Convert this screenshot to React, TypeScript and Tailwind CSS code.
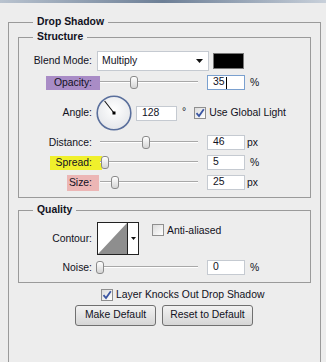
import React from 'react';

const font = { fontFamily: '"Liberation Sans", Arial, sans-serif' };

const Slider = ({ pos }: { pos: number }) => (
  <div className="relative w-[98px] h-[15px] ml-[3px]">
    <div className="absolute left-0 right-0 top-[6px] h-[2px] border-t border-[#a8a8a8] border-b border-b-white" />
    {/* thumb */}
    <div
      className="absolute top-[1px] w-[8px] h-[13px] rounded-[3px] border border-[#8a8a8a] bg-gradient-to-b from-white to-[#d4d4d4]"
      style={{ left: pos - 100 - 4 }}
    />
  </div>
);

const NumInput = ({ value, focused }: { value: string; focused?: boolean }) => (
  <div
    className={`w-[38px] h-[15px] bg-white border flex items-center pl-[5px] text-[10.4px] leading-none ${
      focused ? 'border-[#7aa0cf]' : 'border-[#c5cad1]'
    }`}
  >
    <span>{value}</span>
    {focused && <span className="inline-block w-px h-[12px] bg-black ml-[1px]" />}
  </div>
);

const Check = ({ checked }: { checked?: boolean }) => (
  <div className="w-[12px] h-[12px] border border-[#8f8f8f] bg-gradient-to-br from-[#dcdcdc] to-white flex items-center justify-center">
    {checked && (
      <svg width="10" height="10" viewBox="0 0 10 10">
        <path d="M1.5 5.2 L4 8 L8.8 1.2" fill="none" stroke="#3b56a3" strokeWidth="1.8" />
      </svg>
    )}
  </div>
);

const Label = ({ text, hl }: { text: string; hl?: string }) => (
  <div className="w-[73px] flex justify-end shrink-0">
    <span className={`text-[10.4px] leading-[14px] ${hl ?? ''}`}>{text}</span>
  </div>
);

const SliderRow = ({
  label,
  pos,
  value,
  unit,
  focused,
}: {
  label: React.ReactNode;
  pos: number;
  value: string;
  unit: string;
  focused?: boolean;
}) => (
  <div className="flex items-center h-[15px]">
    {label}
    <div className="w-[5px]" />
    <Slider pos={pos} />
    <div className="w-[9px]" />
    <NumInput value={value} focused={focused} />
    <span className={`text-[10.4px] ${unit === 'px' ? 'ml-[2px]' : 'ml-[5px]'}`}>{unit}</span>
  </div>
);

export default function App() {
  return (
    <div className="w-[326px] h-[362px] overflow-hidden bg-[#ededed] text-[#111122]" style={font}>
      <div className="h-[3px] bg-gradient-to-r from-[#b9c3cf] via-[#6d7f96] to-[#c8d0da]" />

      <fieldset className="ml-[8px] mt-[12px] w-[313px] h-[400px] border border-[#9a9a9a] px-[9px]">
        <legend className="ml-[15px] px-[4px] text-[10.4px] font-bold leading-[14px]">Drop Shadow</legend>

        <fieldset className="mt-[1px] border border-[#9a9a9a] pb-[7px]">
          <legend className="ml-[14px] px-[4px] text-[10.4px] font-bold leading-[14px]">Structure</legend>

          <div className="flex flex-col pt-[7px]">
            {/* Blend mode */}
            <div className="flex items-center h-[20px]">
              <Label text="Blend Mode:" />
              <div className="w-[5px]" />
              <div className="w-[112px] h-[20px] bg-white border border-[#c5cad1] flex items-center justify-between pl-[4px] pr-[5px]">
                <span className="text-[10.4px]">Multiply</span>
                <svg width="7" height="4" viewBox="0 0 7 4">
                  <path d="M0 0 H7 L3.5 4 Z" fill="#111" />
                </svg>
              </div>
              <div className="ml-[4px] w-[31px] h-[16px] bg-black border border-[#777]" />
            </div>

            <div className="h-[4px]" />
            <SliderRow
              label={<Label text="Opacity:" hl="bg-[#a98cc6] pl-[8px] pr-[8px] -mr-[8px]" />}
              pos={134}
              value="35"
              unit="%"
              focused
            />

            {/* Angle */}
            <div className="flex items-center h-[36px] mt-[5px]">
              <Label text="Angle:" />
              <div className="w-[4px]" />
              <svg width="36" height="36" viewBox="0 0 36 36">
                <defs>
                  <radialGradient id="dg" cx="50%" cy="40%" r="60%">
                    <stop offset="0%" stopColor="#ffffff" />
                    <stop offset="100%" stopColor="#e4e6ea" />
                  </radialGradient>
                </defs>
                <circle cx="18" cy="18" r="16.8" fill="url(#dg)" stroke="#5a6f9c" strokeWidth="1.6" />
                <line x1="18" y1="18" x2="8.6" y2="6" stroke="#111" strokeWidth="1.1" />
                <rect x="16.5" y="16.5" width="3" height="3" fill="#000" />
              </svg>
              <div className="w-[4px]" />
              <div className="w-[41px] h-[15px] bg-white border border-[#c5cad1] flex items-center pl-[5px] text-[10.4px]">
                128
              </div>
              <span className="text-[10.4px] ml-[5px] self-start mt-[9px]">°</span>
              <div className="ml-[8px]">
                <Check checked />
              </div>
              <span className="text-[10.4px] ml-[3px]">Use Global Light</span>
            </div>

            <div className="h-[4px]" />
            <SliderRow label={<Label text="Distance:" />} pos={146} value="46" unit="px" />
            <div className="h-[5px]" />
            <SliderRow
              label={<Label text="Spread:" hl="bg-[#f0f02c] pl-[6px] pr-[10px] -mr-[10px]" />}
              pos={105}
              value="5"
              unit="%"
            />
            <div className="h-[5px]" />
            <SliderRow
              label={<Label text="Size:" hl="bg-[#ecb6b5] pl-[2px] pr-[7px] -mr-[7px] py-px" />}
              pos={115}
              value="25"
              unit="px"
            />
          </div>
        </fieldset>

        <fieldset className="mt-[5px] border border-[#9a9a9a] pb-[7px]">
          <legend className="ml-[14px] px-[4px] text-[10.4px] font-bold leading-[14px]">Quality</legend>

          <div className="flex flex-col pt-[5px]">
            <div className="flex items-center h-[33px]">
              <Label text="Contour:" />
              <div className="w-[5px]" />
              <div className="w-[42px] h-[33px] border border-[#222] bg-white flex">
                <svg width="29" height="31" viewBox="0 0 29 31" className="shrink-0">
                  <path d="M0 31 L29 0 L29 31 Z" fill="#8e8e8e" />
                </svg>
                <div className="w-px bg-[#222]" />
                <div className="flex-1 flex items-center justify-center">
                  <svg width="5" height="3" viewBox="0 0 5 3">
                    <path d="M0 0 H5 L2.5 3 Z" fill="#111" />
                  </svg>
                </div>
              </div>
              <div className="ml-[13px] self-start mt-[2px]">
                <Check />
              </div>
              <span className="text-[10.4px] ml-[3px] self-start mt-[1px]">Anti-aliased</span>
            </div>

            <div className="h-[5px]" />
            <SliderRow label={<Label text="Noise:" />} pos={100} value="0" unit="%" />
          </div>
        </fieldset>

        <div className="flex items-center mt-[4px] ml-[83px]">
          <Check checked />
          <span className="text-[10.4px] ml-[3px]">Layer Knocks Out Drop Shadow</span>
        </div>

        <div className="flex mt-[2px] ml-[57px] gap-[6px]">
          <button className="w-[81px] h-[21px] rounded-[3px] border border-[#707070] bg-gradient-to-b from-[#f2f2f2] to-[#d6d6d6] text-[10.4px]">
            Make Default
          </button>
          <button className="w-[91px] h-[21px] rounded-[3px] border border-[#707070] bg-gradient-to-b from-[#f2f2f2] to-[#d6d6d6] text-[10.4px]">
            Reset to Default
          </button>
        </div>
      </fieldset>
    </div>
  );
}
